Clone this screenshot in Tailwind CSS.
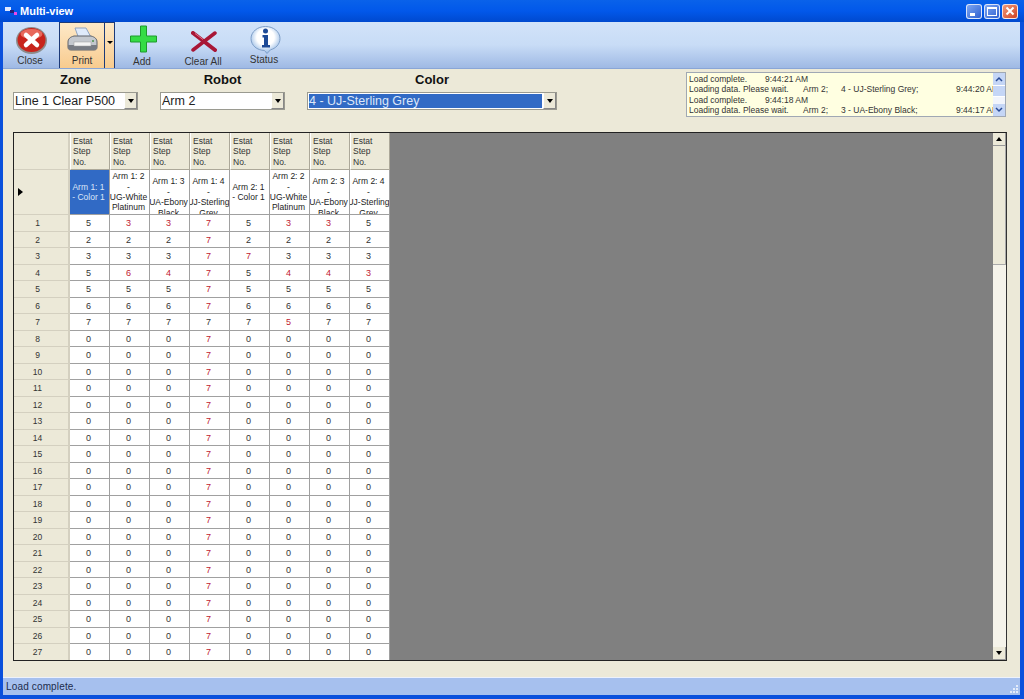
<!DOCTYPE html>
<html>
<head>
    <title>Multi-view</title>
    <script src="https://cdn.jsdelivr.net/npm/@tailwindcss/browser@4"></script>
</head>
<body class="bg-[#ece9d8]">
<div class="w-[1024px] h-[699px] overflow-hidden flex flex-col font-['Liberation_Sans',Arial,sans-serif] text-[#222]">

    <!-- title bar -->
    <div class="h-[22px] shrink-0 flex items-center pl-[5px] pr-[6px] bg-gradient-to-b from-[#0a62ea] via-[#0258ea] to-[#0049cf]">
        <svg width="13" height="9" viewBox="0 0 13 9" class="mr-[2px] mt-[1px]">
            <rect x="0" y="0" width="6" height="4" fill="#dfe8ff"/>
            <rect x="5" y="3" width="4" height="3" fill="#22227a"/>
            <rect x="9" y="5" width="3" height="3" fill="#e848e8"/>
        </svg>
        <span class="text-white text-[11px] font-bold">Multi-view</span>
        <div class="ml-auto flex gap-[2px] items-center">
            <div class="relative w-[16px] h-[15px] rounded-[3px] border border-white/80 bg-gradient-to-br from-[#7ea6f2] to-[#2f5fd0]">
                <div class="absolute left-[3px] bottom-[2px] w-[5px] h-[3px] bg-white"></div>
            </div>
            <div class="w-[16px] h-[15px] rounded-[3px] border border-white/80 bg-gradient-to-br from-[#7ea6f2] to-[#2f5fd0] flex items-center justify-center">
                <div class="w-[10px] h-[9px] border border-white border-t-2"></div>
            </div>
            <div class="w-[16px] h-[15px] rounded-[3px] border border-white/80 bg-gradient-to-br from-[#f09878] to-[#d04020] flex items-center justify-center">
                <svg width="10" height="10" viewBox="0 0 10 10"><path d="M1.500 1.500l7 7M8.500 1.500l-7 7" stroke="#fff" stroke-width="2"/></svg>
            </div>
        </div>
    </div>

    <div class="flex-1 min-h-0 flex flex-col border-l-[3px] border-r-[4px] border-b-[4px] border-[#0a50dc]">

        <!-- toolbar -->
        <div class="h-[47px] shrink-0 flex bg-gradient-to-b from-[#d2e3f9] via-[#c8dcf6] to-[#9fb9e4] border-b border-[#8aa6d6]">
            <div class="w-[54px] flex flex-col items-center pt-[5px]">
                <svg width="31" height="27" viewBox="0 0 31 27" class="ml-[2px]">
                    <ellipse cx="15.500" cy="13.500" rx="15.500" ry="13.500" fill="#8c8c8c"/>
                    <ellipse cx="15.500" cy="13" rx="14" ry="12" fill="#c8241c"/>
                    <ellipse cx="15.500" cy="7" rx="11" ry="5" fill="#e8695c"/>
                    <path d="M10 8l11 10M21 8l-11 10" stroke="#fff" stroke-width="4.500" stroke-linecap="round"/>
                </svg>
                <span class="text-[10px] leading-[12px] mt-[1px] text-[#333]">Close</span>
            </div>
            <div class="ml-[2px] w-[56px] flex border border-[#1c3a78] border-b-0 bg-gradient-to-b from-[#fde9c8] to-[#f8cb8e]">
                <div class="w-[45px] flex flex-col items-center pt-[4px] border-r border-[#1c3a78]">
                    <svg width="31" height="25" viewBox="0 0 31 25" class="shrink-0">
                        <path d="M8 1h11l6 11H12z" fill="#dfeafa" stroke="#8fa3c0"/>
                        <path d="M7 9C3 10 1 12 1 15v5c0 2 1 3 3 3h23c2 0 3-1 3-3v-5c0-3-2-5-6-6z" fill="#c4c8ce" stroke="#5f636b"/>
                        <path d="M1 18h29v2c0 2-1 3-3 3H4c-2 0-3-1-3-3z" fill="#777b83"/>
                        <rect x="7" y="15" width="17" height="4" fill="#f4f4f4" stroke="#9a9a9a" stroke-width="0.500"/>
                        <circle cx="26" cy="14" r="1" fill="#4c8f4c"/>
                    </svg>
                    <span class="text-[10px] leading-[12px] mt-[3px] text-[#333]">Print</span>
                </div>
                <div class="flex-1 flex items-center justify-center pb-[6px]">
                    <div class="w-0 h-0 border-l-[3px] border-r-[3px] border-t-[3px] border-l-transparent border-r-transparent border-t-black"></div>
                </div>
            </div>
            <div class="w-[54px] flex flex-col items-center pt-[3px]">
                <svg width="28" height="28" viewBox="0 0 28 28" class="ml-[3px]">
                    <path d="M10.500 1h6v10h10v6h-10v10h-6V17h-10v-6h10z" fill="#35dc45" stroke="#1e9a2c"/>
                </svg>
                <span class="text-[10px] leading-[12px] mt-[3px] text-[#333]">Add</span>
            </div>
            <div class="w-[68px] flex flex-col items-center pt-[9px]">
                <svg width="26" height="21" viewBox="0 0 26 21" class="ml-[2px]">
                    <path d="M2 2l22 17" stroke="#a81636" stroke-width="4" stroke-linecap="round"/>
                    <path d="M24 2L2 19" stroke="#a81636" stroke-width="3.500" stroke-linecap="round"/>
                    <path d="M4 2.500l8 6" stroke="#e0708c" stroke-width="1"/>
                </svg>
                <span class="text-[10px] leading-[12px] mt-[4px] text-[#333]">Clear All</span>
            </div>
            <div class="w-[54px] flex flex-col items-center pt-[4px]">
                <svg width="31" height="28" viewBox="0 0 31 28" class="ml-[2px] shrink-0">
                    <defs>
                        <radialGradient id="bubble" cx="0.500" cy="0.400" r="0.600">
                            <stop offset="0.500" stop-color="#ffffff"/>
                            <stop offset="1" stop-color="#8fb6e4"/>
                        </radialGradient>
                    </defs>
                    <path d="M15.500 0.500C23.500 0.500 30 5.800 30 12.500 30 18.500 25.500 22.500 20.500 23.800L17 27.500 14.500 24.500C7 24.300 1 19.500 1 12.500 1 5.800 7.500 0.500 15.500 0.500z" fill="url(#bubble)" stroke="#7f9fc8"/>
                    <circle cx="15.500" cy="5" r="2.500" fill="#1e4a96"/>
                    <path d="M12.500 9h5.500v10h2v2.500h-8V19h2v-7.500h-1.500z" fill="#1e4a96"/>
                </svg>
                <span class="text-[10px] leading-[12px] text-[#333]">Status</span>
            </div>
        </div>

        <!-- filters -->
        <div class="h-[63px] shrink-0 flex pl-[10px] pr-[14px] pt-[3px]">
            <div class="w-[125px] flex flex-col">
                <div class="h-[20px] text-center text-[13px] leading-[15px] font-bold text-[#111]">Zone</div>
                <div class="h-[18px] flex bg-white border border-[#9a9a90]">
                    <div class="flex-1 pl-[1px] text-[12.5px] leading-[16px] whitespace-nowrap overflow-hidden">Line 1 Clear P500</div>
                    <div class="w-[13px] bg-[#ece9d8] border-l border-white border-r border-b border-r-[#888] border-b-[#888] flex items-center justify-center">
                        <div class="w-0 h-0 border-l-[3px] border-r-[3px] border-t-[4px] border-l-transparent border-r-transparent border-t-black"></div>
                    </div>
                </div>
            </div>
            <div class="ml-[22px] w-[125px] flex flex-col">
                <div class="h-[20px] text-center text-[13px] leading-[15px] font-bold text-[#111]">Robot</div>
                <div class="h-[18px] flex bg-white border border-[#9a9a90]">
                    <div class="flex-1 pl-[1px] text-[12.5px] leading-[16px] whitespace-nowrap overflow-hidden">Arm 2</div>
                    <div class="w-[13px] bg-[#ece9d8] border-l border-white border-r border-b border-r-[#888] border-b-[#888] flex items-center justify-center">
                        <div class="w-0 h-0 border-l-[3px] border-r-[3px] border-t-[4px] border-l-transparent border-r-transparent border-t-black"></div>
                    </div>
                </div>
            </div>
            <div class="ml-[22px] w-[250px] flex flex-col">
                <div class="h-[20px] text-center text-[13px] leading-[15px] font-bold text-[#111]">Color</div>
                <div class="h-[18px] flex bg-white border border-[#9a9a90]">
                    <div class="flex-1 m-[1px] bg-[#316ac5] text-[#dce6f8] text-[12.5px] leading-[14px] whitespace-nowrap overflow-hidden">4 - UJ-Sterling Grey</div>
                    <div class="w-[13px] bg-[#ece9d8] border-l border-white border-r border-b border-r-[#888] border-b-[#888] flex items-center justify-center">
                        <div class="w-0 h-0 border-l-[3px] border-r-[3px] border-t-[4px] border-l-transparent border-r-transparent border-t-black"></div>
                    </div>
                </div>
            </div>

            <!-- log -->
            <div class="ml-auto w-[320px] h-[45px] flex bg-[#ffffe1] border border-[#a0a8b4]">
                <div class="flex-1 min-w-0 overflow-hidden pl-[2px] pt-[1px] text-[8.5px] leading-[10.4px] text-[#333]">
                    <div class="flex whitespace-nowrap"><span class="w-[76px] shrink-0">Load complete.</span><span class="shrink-0">9:44:21 AM</span></div>
                    <div class="flex whitespace-nowrap"><span class="w-[114px] shrink-0">Loading data. Please wait.</span><span class="w-[38px] shrink-0">Arm 2;</span><span class="w-[115px] shrink-0">4 - UJ-Sterling Grey;</span><span class="shrink-0">9:44:20 AM</span></div>
                    <div class="flex whitespace-nowrap"><span class="w-[76px] shrink-0">Load complete.</span><span class="shrink-0">9:44:18 AM</span></div>
                    <div class="flex whitespace-nowrap"><span class="w-[114px] shrink-0">Loading data. Please wait.</span><span class="w-[38px] shrink-0">Arm 2;</span><span class="w-[115px] shrink-0">3 - UA-Ebony Black;</span><span class="shrink-0">9:44:17 AM</span></div>
                </div>
                <div class="w-[12px] shrink-0 flex flex-col bg-[#f2f5fc]">
                    <div class="h-[12px] bg-[#c5d6f6] flex items-center justify-center">
                        <svg width="8" height="6" viewBox="0 0 8 6"><path d="M1 5l3-3 3 3" fill="none" stroke="#2a4d98" stroke-width="1.500"/></svg>
                    </div>
                    <div class="h-[12px] bg-[#c5d6f6] border-y border-white"></div>
                    <div class="flex-1"></div>
                    <div class="h-[12px] bg-[#c5d6f6] flex items-center justify-center">
                        <svg width="8" height="6" viewBox="0 0 8 6"><path d="M1 1l3 3 3-3" fill="none" stroke="#2a4d98" stroke-width="1.500"/></svg>
                    </div>
                </div>
            </div>
        </div>

        <!-- grid -->
        <div class="ml-[10px] mr-[13px] h-[529px] shrink-0 flex border border-[#222] border-r-[#333] bg-[#808080]">
            <div class="w-[376px] shrink-0 h-full overflow-hidden" id="grid"></div>
            <div class="flex-1"></div>
            <div class="w-[13px] shrink-0 h-full flex flex-col bg-[#f5f3ea]">
                <div class="h-[13px] bg-[#ece9d8] border-r border-b border-[#999] flex items-center justify-center">
                    <div class="w-0 h-0 border-l-[3px] border-r-[3px] border-b-[4px] border-l-transparent border-r-transparent border-b-black"></div>
                </div>
                <div class="h-[119px] bg-[#ece9d8] border-r border-b border-[#aaa]"></div>
                <div class="flex-1"></div>
                <div class="h-[13px] bg-[#ece9d8] border-r border-b border-[#999] flex items-center justify-center">
                    <div class="w-0 h-0 border-l-[3px] border-r-[3px] border-t-[4px] border-l-transparent border-r-transparent border-t-black"></div>
                </div>
            </div>
        </div>

        <div class="flex-1"></div>

        <!-- status bar -->
        <div class="h-[18px] shrink-0 relative bg-[#a6c0ee] border-t border-white/80 pl-[3px] text-[10px] leading-[17px] tracking-[0.15px] text-[#1c2c4c]">
            Load complete.
            <div class="absolute right-[2px] bottom-[2px] grid grid-cols-3 gap-[1px]">
                <div class="w-[2px] h-[2px]"></div><div class="w-[2px] h-[2px]"></div><div class="w-[2px] h-[2px] bg-white/70"></div>
                <div class="w-[2px] h-[2px]"></div><div class="w-[2px] h-[2px] bg-white/70"></div><div class="w-[2px] h-[2px] bg-white/70"></div>
                <div class="w-[2px] h-[2px] bg-white/70"></div><div class="w-[2px] h-[2px] bg-white/70"></div><div class="w-[2px] h-[2px] bg-white/70"></div>
            </div>
        </div>
    </div>
</div>

<script>
    const columns = [
        ['Arm 1: 1', '- Color 1'],
        ['Arm 1: 2', '-', 'UG-White', 'Platinum'],
        ['\u00a0', 'Arm 1: 3', '-', 'UA-Ebony', 'Black'],
        ['\u00a0', 'Arm 1: 4', '-', 'UJ-Sterling', 'Grey'],
        ['Arm 2: 1', '- Color 1'],
        ['Arm 2: 2', '-', 'UG-White', 'Platinum'],
        ['\u00a0', 'Arm 2: 3', '-', 'UA-Ebony', 'Black'],
        ['\u00a0', 'Arm 2: 4', '-', 'UJ-Sterling', 'Grey'],
    ];

    // negative value = red cell
    const firstRows = [
        [5, -3, -3, -7, 5, -3, -3, 5],
        [2, 2, 2, -7, 2, 2, 2, 2],
        [3, 3, 3, -7, -7, 3, 3, 3],
        [5, -6, -4, -7, 5, -4, -4, -3],
        [5, 5, 5, -7, 5, 5, 5, 5],
        [6, 6, 6, -7, 6, 6, 6, 6],
        [7, 7, 7, 7, 7, -5, 7, 7],
    ];

    const headCells = columns.map(() => `
        <div class="w-[40px] h-[37px] shrink-0 bg-[#ece9d8] border-l border-white border-r border-r-[#aca899] border-b border-b-[#aca899] pl-[2px] pt-[3px] text-[8.5px] leading-[10.4px] text-[#333]">
            <div>Estat</div><div>Step</div><div>No.</div>
        </div>`).join('');

    const nameCells = columns.map((lines, i) => `
        <div class="w-[40px] h-[45px] shrink-0 overflow-hidden flex flex-col items-center justify-center border-r border-b border-[#a0a0a0] pr-[2px] text-[8.5px] leading-[10.4px] ${i == 0 ? 'bg-[#316ac5] text-[#dce6f8]' : 'bg-white text-[#222]'}">
            ${lines.map(l => `<div class="shrink-0 whitespace-nowrap">${l}</div>`).join('')}
        </div>`).join('');

    let html = `
        <div class="flex">
            <div class="w-[56px] h-[37px] shrink-0 bg-[#ece9d8] border-r-2 border-b border-[#d4d0c0]"></div>${headCells}
        </div>
        <div class="flex">
            <div class="w-[56px] h-[45px] shrink-0 bg-[#ece9d8] border-r-2 border-b border-[#d4d0c0] flex items-center pl-[4px]">
                <div class="w-0 h-0 border-y-[4px] border-l-[5px] border-y-transparent border-l-black"></div>
            </div>${nameCells}
        </div>`;

    for (let r = 0; r < 27; r++) {
        const values = firstRows[r] || [0, 0, 0, -7, 0, 0, 0, 0];
        html += `
        <div class="flex h-[16.5px]">
            <div class="w-[56px] shrink-0 bg-[#ece9d8] border-r-2 border-b border-[#d4d0c0] text-center pr-[7px] text-[8.5px] leading-[16px] text-[#333]">${r + 1}</div>
            ${values.map(v => `<div class="w-[40px] shrink-0 bg-white border-r border-b border-[#a0a0a0] text-center pr-[2px] text-[9px] leading-[17px] ${v < 0 ? 'text-[#c02030]' : 'text-[#333]'}">${Math.abs(v)}</div>`).join('')}
        </div>`;
    }

    document.getElementById('grid').innerHTML = html;
</script>
</body>
</html>
